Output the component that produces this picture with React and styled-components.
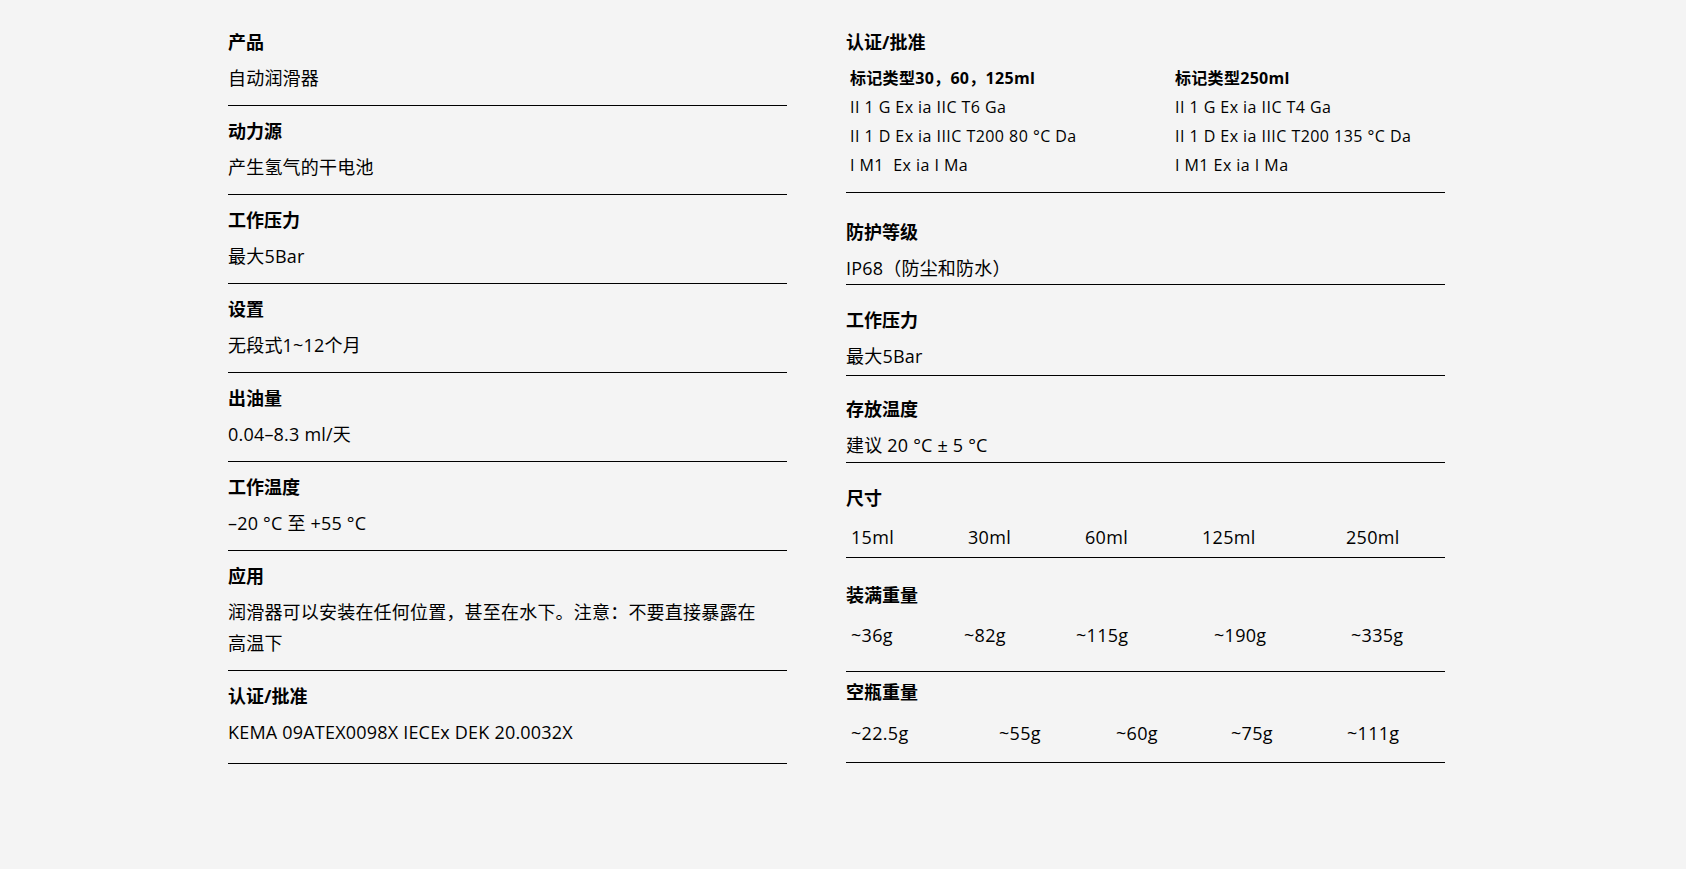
import styled, { createGlobalStyle } from 'styled-components'

const GlobalStyle = createGlobalStyle`
  body {
    margin: 0;
    background: #fff;
    font-family: "Open Sans", "Noto Sans CJK SC", sans-serif;
    color: #000;
  }
`

const Page = styled.div`
  box-sizing: border-box;
  min-height: 869px;
  background: #f4f4f4;
  padding: 17px 0 0 228px;
  display: grid;
  grid-template-columns: 559px 599px;
  column-gap: 59px;
  align-items: start;
`

const Column = styled.div`
  display: flex;
  flex-direction: column;
`

const Item = styled.div`
  padding: ${(p) => p.$pt ?? 12}px 0 ${(p) => p.$pb ?? 11}px;
  border-bottom: 1px solid #000;
`

const Title = styled.div`
  font-size: 18px;
  font-weight: 700;
  line-height: 27px;
`

const Value = styled.div`
  margin-top: ${(p) => p.$gap ?? 7}px;
  padding-right: 20px;
  font-size: 18px;
  line-height: 31px;
  letter-spacing: 0.2px;
`

const MarkTable = styled.div`
  margin-top: 8px;
  padding-left: 4px;
  display: grid;
  grid-template-columns: 325px 1fr;
  font-size: 16px;
  line-height: 29px;
`

const MarkHead = styled.div`
  font-weight: 700;
  letter-spacing: 0.3px;
`

const MarkCell = styled.div`
  white-space: pre;
  letter-spacing: 0.45px;
`

const NumRow = styled.div`
  margin-top: ${(p) => p.$gap}px;
  padding-left: 5px;
  display: grid;
  grid-template-columns: ${(p) => p.$cols};
  font-size: 18px;
  line-height: 31px;
  letter-spacing: 0.3px;
`

const leftSpecs = [
  { title: '产品', value: '自动润滑器' },
  { title: '动力源', value: '产生氢气的干电池' },
  { title: '工作压力', value: '最大5Bar' },
  { title: '设置', value: '无段式1~12个月' },
  { title: '出油量', value: '0.04–8.3 ml/天' },
  { title: '工作温度', value: '–20 °C 至 +55 °C' },
  { title: '应用', value: '润滑器可以安装在任何位置，甚至在水下。注意：不要直接暴露在高温下' },
  { title: '认证/批准', value: 'KEMA 09ATEX0098X IECEx DEK 20.0032X', pb: 15 },
]

const markLeft = ['II 1 G Ex ia IIC T6 Ga', 'II 1 D Ex ia IIIC T200 80 °C Da', 'I M1  Ex ia I Ma']
const markRight = ['II 1 G Ex ia IIC T4 Ga', 'II 1 D Ex ia IIIC T200 135 °C Da', 'I M1 Ex ia I Ma']

const rightSpecs = [
  { title: '防护等级', value: 'IP68（防尘和防水）', pt: 26, pb: 0 },
  { title: '工作压力', value: '最大5Bar', pt: 22, pb: 3 },
  { title: '存放温度', value: '建议 20 °C ± 5 °C', pt: 20, pb: 1 },
]

const numRows = [
  {
    title: '尺寸',
    items: ['15ml', '30ml', '60ml', '125ml', '250ml'],
    cols: '117px 117px 117px 144px 1fr',
    pt: 22, gap: 10, pb: 4,
  },
  {
    title: '装满重量',
    items: ['~36g', '~82g', '~115g', '~190g', '~335g'],
    cols: '113px 112px 138px 137px 1fr',
    pt: 24, gap: 11, pb: 20,
  },
  {
    title: '空瓶重量',
    items: ['~22.5g', '~55g', '~60g', '~75g', '~111g'],
    cols: '148px 117px 115px 116px 1fr',
    pt: 7, gap: 12, pb: 13,
  },
]

export default function App() {
  return (
    <>
      <GlobalStyle />
      <Page>
        <Column>
          {leftSpecs.map((s) => (
            <Item key={s.title} $pb={s.pb}>
              <Title>{s.title}</Title>
              <Value>{s.value}</Value>
            </Item>
          ))}
        </Column>

        <Column>
          <Item $pb={12}>
            <Title>认证/批准</Title>
            <MarkTable>
              <MarkHead>标记类型30，60，125ml</MarkHead>
              <MarkHead>标记类型250ml</MarkHead>
              {markLeft.map((m, i) => [
                <MarkCell key={'l' + i}>{m}</MarkCell>,
                <MarkCell key={'r' + i}>{markRight[i]}</MarkCell>,
              ])}
            </MarkTable>
          </Item>

          {rightSpecs.map((s) => (
            <Item key={s.title} $pt={s.pt} $pb={s.pb}>
              <Title>{s.title}</Title>
              <Value>{s.value}</Value>
            </Item>
          ))}

          {numRows.map((r) => (
            <Item key={r.title} $pt={r.pt} $pb={r.pb}>
              <Title>{r.title}</Title>
              <NumRow $gap={r.gap} $cols={r.cols}>
                {r.items.map((v) => (
                  <span key={v}>{v}</span>
                ))}
              </NumRow>
            </Item>
          ))}
        </Column>
      </Page>
    </>
  )
}
